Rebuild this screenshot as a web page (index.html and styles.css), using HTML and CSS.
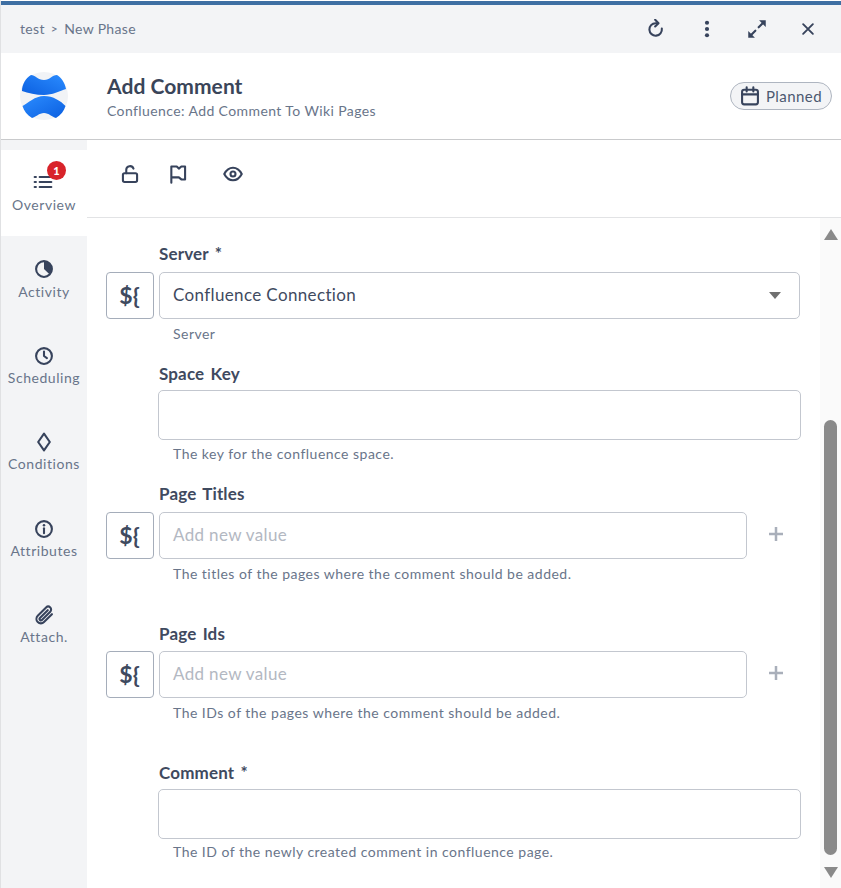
FILE: index.html
```html
<!DOCTYPE html>
<html lang="en">
<head>
<meta charset="utf-8">
<title>Add Comment</title>
<link rel="stylesheet" href="styles.css">
</head>
<body>
<div class="app">
  <header class="topbar">
    <nav class="crumbs"><span>test</span><span class="sep">&gt;</span><span>New Phase</span></nav>
    <div class="actions">
      <svg class="ico a1" viewBox="0 0 24 24"><path d="M19 11.500a7.500 7.500 0 1 1-7.500-6.500h2.500"/><path d="M11 1l4 4-4 4"/></svg>
      <svg class="ico a2" viewBox="0 0 24 24"><circle cx="12" cy="4.500" r="2.500" class="fill"/><circle cx="12" cy="12" r="2.500" class="fill"/><circle cx="12" cy="19.500" r="2.500" class="fill"/></svg>
      <svg class="ico a3" viewBox="0 0 24 24"><path d="M14 10l6-6M10 14l-6 6"/><path class="fill" d="M14.500 1.500H22.500V9.500zM1.500 14.500V22.500H9.500z"/></svg>
      <svg class="ico a4" viewBox="0 0 24 24"><path d="M5.500 5.500l13 13M18.500 5.500l-13 13"/></svg>
    </div>
  </header>
  <section class="title">
    <svg class="logo" viewBox="0 0 48 48">
      <defs>
        <linearGradient id="g1" x1="0" y1="1" x2="1" y2="0"><stop offset="0" stop-color="#0b5fe0"/><stop offset="1" stop-color="#2b8cff"/></linearGradient>
        <linearGradient id="g2" x1="0" y1="0" x2="1" y2="1"><stop offset="0" stop-color="#2b8cff"/><stop offset="1" stop-color="#0b5fe0"/></linearGradient>
      </defs>
      <circle cx="24" cy="24" r="24" fill="#f1f3f6"/>
      <path d="M11 3C15 3 18 8 24 8C30 8 32 3 37 3C41 5 45 11 46 17C40 19 32 23 24 23C16 23 8 21 2 19C2 12 6 6 11 3Z" fill="url(#g1)"/>
      <path d="M2.500 34C8 31 15 24 24 24C33 24 41 29 45.500 34C44 39 41 43 36 46C32 45 29 41 24 41C19 41 16 45 12 46C7 43 4 39 2.500 34Z" fill="url(#g2)"/>
    </svg>
    <div class="heading">
      <h1>Add Comment</h1>
      <p>Confluence: Add Comment To Wiki Pages</p>
    </div>
    <div class="status">
      <svg class="ico cal" viewBox="0 0 24 24"><rect x="2.500" y="4.500" width="19" height="17.500" rx="2.500"/><path d="M2.500 10h19M8 1.500v5M16 1.500v5"/></svg>
      <span>Planned</span>
    </div>
  </section>
  <div class="main">
    <aside class="side">
      <div class="tab active">
        <span class="tab-ico">
          <svg class="ico" viewBox="0 0 24 24"><path d="M8 6h14M8 12h14M8 18h14M2 6h1.500M2 12h1.500M2 18h1.500"/></svg>
          <b class="badge">1</b>
        </span>
        <span>Overview</span>
      </div>
      <div class="tab">
        <span class="tab-ico"><svg class="ico" viewBox="0 0 24 24"><circle cx="12" cy="12" r="9.500"/><path class="fill" d="M12 3a9 9 0 0 1 6.500 15.200L12 12z"/></svg></span>
        <span>Activity</span>
      </div>
      <div class="tab">
        <span class="tab-ico"><svg class="ico" viewBox="0 0 24 24"><circle cx="12" cy="12" r="9.500"/><path d="M12 6.500V12l3.500 2.500"/></svg></span>
        <span>Scheduling</span>
      </div>
      <div class="tab">
        <span class="tab-ico"><svg class="ico" viewBox="0 0 24 24"><path d="M12 2l7 10-7 10-7-10z"/></svg></span>
        <span>Conditions</span>
      </div>
      <div class="tab">
        <span class="tab-ico"><svg class="ico" viewBox="0 0 24 24"><circle cx="12" cy="12" r="9.500"/><path d="M12 11v6"/><circle class="fill" cx="12" cy="7.500" r="1.500"/></svg></span>
        <span>Attributes</span>
      </div>
      <div class="tab">
        <span class="tab-ico"><svg class="ico" viewBox="0 0 24 24"><path d="M21.500 11l-9.500 9.500a5.300 5.300 0 0 1-7.500-7.500l10-10a3.500 3.500 0 0 1 5 5l-10 10a1.700 1.700 0 0 1-2.400-2.400l9.400-9.400"/></svg></span>
        <span>Attach.</span>
      </div>
    </aside>
    <div class="panel">
      <div class="toolbar">
        <svg class="ico t1" viewBox="0 0 24 24"><rect x="3.500" y="11" width="17" height="10.500" rx="2"/><path d="M7.500 11V7a4.500 4.500 0 0 1 8.700-1.500"/></svg>
        <svg class="ico t2" viewBox="0 0 24 24"><path d="M4 22.500V3h6.500l2.500 2.500 3-2.500h4.500v15.500h-4.500l-3-2.500h-9"/></svg>
        <svg class="ico t3" viewBox="0 0 24 24"><path d="M1.500 12c2.500-4.800 6.200-7.500 10.500-7.500s8 2.700 10.500 7.500c-2.500 4.800-6.200 7.500-10.500 7.500s-8-2.700-10.500-7.500z"/><circle cx="12" cy="12" r="3"/></svg>
      </div>
      <div class="scroller">
        <form class="form">
          <div class="field f-server">
            <label>Server *</label>
            <div class="row">
              <button type="button" class="var">${</button>
              <div class="control select"><span>Confluence Connection</span><i class="caret"></i></div>
            </div>
            <small>Server</small>
          </div>
          <div class="field f-space">
            <label>Space Key</label>
            <div class="control tall"></div>
            <small>The key for the confluence space.</small>
          </div>
          <div class="field f-titles">
            <label>Page Titles</label>
            <div class="row">
              <button type="button" class="var">${</button>
              <div class="control multi placeholder">Add new value</div>
              <svg class="plus" viewBox="0 0 16 16"><path d="M8 1v14M1 8h14"/></svg>
            </div>
            <small>The titles of the pages where the comment should be added.</small>
          </div>
          <div class="field f-ids">
            <label>Page Ids</label>
            <div class="row">
              <button type="button" class="var">${</button>
              <div class="control multi placeholder">Add new value</div>
              <svg class="plus" viewBox="0 0 16 16"><path d="M8 1v14M1 8h14"/></svg>
            </div>
            <small>The IDs of the pages where the comment should be added.</small>
          </div>
          <div class="field f-comment">
            <label>Comment *</label>
            <div class="control tall"></div>
            <small>The ID of the newly created comment in confluence page.</small>
          </div>
        </form>
        <div class="scrollbar">
          <i class="arrow up"></i>
          <div class="track"><div class="thumb"></div></div>
          <i class="arrow down"></i>
        </div>
      </div>
    </div>
  </div>
</div>
</body>
</html>
```

FILE: styles.css
```css
* { box-sizing: border-box; }
html, body { margin: 0; padding: 0; height: 100%; overflow: hidden; background: #fff; }
body { font-family: Lato, "Open Sans", sans-serif; color: #3f4a5f; }
.app { width: 841px; height: 888px; display: flex; flex-direction: column; border-left: 1px solid #e0e1e3; border-top: 1px solid #fff; overflow: hidden; }
.ico { display: block; fill: none; stroke: #37435c; stroke-width: 2.500; stroke-linecap: round; stroke-linejoin: round; }
.ico .fill { fill: #37435c; stroke: none; }

.topbar { height: 52px; flex: none; border-top: 4px solid #3e6fa3; background: #f3f4f6; display: flex; align-items: center; justify-content: space-between; padding: 0 24px 2px 19px; font-size: 14px; color: #69758a; }
.crumbs { display: flex; gap: 6px; letter-spacing: .35px; }
.crumbs .sep { font-size: 12px; line-height: 17px; }
.actions { display: flex; align-items: center; padding-top: 2px; }
.actions .ico { width: 20px; height: 20px; }
.a2 { margin-left: 31px; }
.a3 { margin-left: 30px; }
.a4 { margin-left: 32px; width: 18px !important; height: 18px !important; }

.title { height: 87px; flex: none; display: flex; align-items: center; padding: 0 9px 0 19px; border-bottom: 1px solid #c9cacc; background: #fff; }
.logo { width: 48px; height: 48px; flex: none; }
.heading { margin-left: 39px; flex: 1; padding-top: 1px; }
.heading h1 { margin: 0; font-size: 21px; line-height: 26px; font-weight: 700; color: #3a4559; letter-spacing: .05px; }
.heading p { margin: 3px 0 0; font-size: 14px; line-height: 18px; color: #69758a; letter-spacing: .4px; }
.status { display: flex; align-items: center; gap: 6px; height: 28px; padding: 0 9px 0 9px; border: 1px solid #aeb5c0; border-radius: 14px; background: #f3f4f6; font-size: 15px; color: #4c5970; letter-spacing: .44px; }
.cal { width: 20px; height: 20px; }

.main { flex: 1; display: flex; min-height: 0; }
.side { width: 86px; flex: none; background: #f3f4f6; padding-top: 10px; }
.tab { height: 86.400px; display: flex; flex-direction: column; align-items: center; padding-top: 23px; font-size: 14px; line-height: 18px; color: #69758a; letter-spacing: .55px; }
.tab.active { background: #fff; padding-top: 21px; }
.tab-ico { position: relative; display: block; width: 20px; height: 20px; margin-bottom: 3.300px; }
.tab-ico .ico { width: 20px; height: 20px; }
.tab.active .tab-ico { height: 22px; margin-bottom: 3px; }
.tab.active .tab-ico .ico { margin-top: 1px; margin-left: -1px; }
.badge { position: absolute; top: -10px; left: 13px; width: 19px; height: 19px; border-radius: 50%; background: #d8232a; color: #fff; font-size: 11px; line-height: 19px; text-align: center; font-weight: 900; letter-spacing: 0; }

.panel { flex: 1; min-width: 0; display: flex; flex-direction: column; }
.toolbar { height: 78px; flex: none; display: flex; align-items: flex-start; padding: 24px 0 0 33px; border-bottom: 1px solid #e2e3e5; }
.toolbar .ico { width: 20px; height: 20px; }
.t2 { margin-left: 28px; }
.t3 { margin-left: 35px; }

.scroller { flex: 1; display: flex; min-height: 0; }
.form { width: 733px; flex: none; padding: 26px 0 0 19px; }
.field label { display: block; margin-left: 53px; font-size: 17px; line-height: 20px; font-weight: 700; color: #3f4a5f; letter-spacing: .15px; word-spacing: 2px; }
.field small { display: block; margin-left: 67px; font-size: 14px; line-height: 18px; color: #69758a; letter-spacing: .48px; }
.row { display: flex; align-items: center; }
.var { width: 48px; height: 47px; flex: none; padding: 0 1px 2px 0; border: 1px solid #a5adba; border-radius: 4px; background: #fff; font-family: Lato, sans-serif; font-size: 23px; font-weight: 700; color: #3f4a5f; }
.control { border: 1px solid #c3c7cf; border-radius: 5px; background: #fff; font-size: 17px; color: #3f4a5f; }
.select { width: 641px; height: 47px; margin-left: 5px; padding: 0 13px 2px; display: flex; align-items: center; justify-content: space-between; letter-spacing: .36px; }
.caret { width: 0; height: 0; margin: 2px 5px 0 0; border-left: 6.500px solid transparent; border-right: 6.500px solid transparent; border-top: 7px solid #707070; }
.tall { width: 643px; height: 50px; margin: 6px 0 5px 52px; }
.multi { width: 588px; height: 47px; margin-left: 5px; padding: 0 13px 2px; display: flex; align-items: center; }
.placeholder { color: #b3b8c2; letter-spacing: .35px; }
.plus { width: 16px; height: 16px; margin: 0 0 3px 21px; fill: none; stroke: #a9afba; stroke-width: 2.500; }

.f-server label { margin-bottom: 8px; }
.f-server small { margin-top: 6px; }
.f-space { margin-top: 21px; }
.f-titles { margin-top: 21px; }
.f-titles label { margin-bottom: 8px; }
.f-titles small { margin-top: 6px; }
.f-ids { margin-top: 41px; }
.f-ids label { margin-bottom: 7px; }
.f-ids small { margin-top: 6px; }
.f-comment { margin-top: 41px; }
.f-comment .tall { margin-bottom: 4px; }

.scrollbar { width: 21px; flex: none; background: #fafafa; display: flex; flex-direction: column; align-items: center; padding: 11px 0 10px; }
.track { flex: 1; width: 13px; display: flex; flex-direction: column; justify-content: flex-end; padding-bottom: 12px; }
.thumb { height: 435px; background: #8a8a8a; border-radius: 7px; }
.arrow { display: block; width: 0; height: 0; flex: none; border-left: 7.500px solid transparent; border-right: 7.500px solid transparent; }
.arrow.up { border-bottom: 11px solid #8a8a8a; }
.arrow.down { border-top: 11px solid #8a8a8a; }
```
